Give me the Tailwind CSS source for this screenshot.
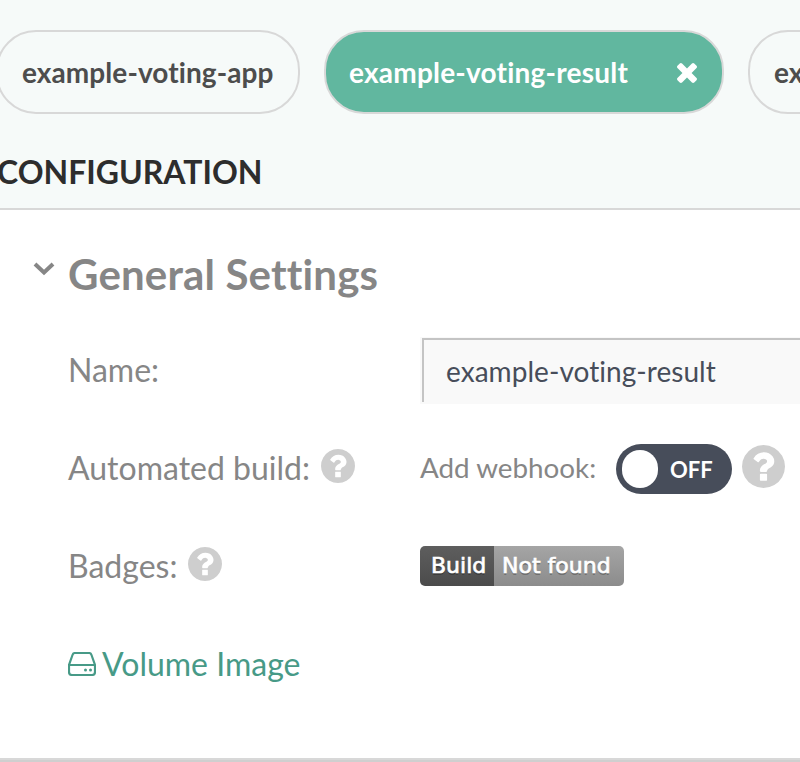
<!DOCTYPE html>
<html lang="en">
<head>
<meta charset="utf-8">
<title>Configuration</title>
<script src="https://cdn.jsdelivr.net/npm/@tailwindcss/browser@4"></script>
</head>
<body class="w-[800px] h-[762px] overflow-hidden bg-white font-['Lato',sans-serif] text-[#868686] [font-variant-ligatures:none]">
<svg class="hidden">
  <symbol id="help" viewBox="128 128 1536 1536"><path fill="currentColor" d="M1024 1376v-192q0-14-9-23t-23-9H800q-14 0-23 9t-9 23v192q0 14 9 23t23 9h192q14 0 23-9t9-23zm256-672q0-88-55.500-163T1086 425t-170-41q-243 0-371 213-15 24 8 42l132 100q7 6 19 6 16 0 25-12 53-68 86-92 34-24 86-24 48 0 85.500 26t37.500 59q0 38-20 61t-68 45q-63 28-115.500 86.500T768 1020v36q0 14 9 23t23 9h192q14 0 23-9t9-23q0-19 21.500-49.500T1100 957q32-18 49-28.500t46-35 44.500-48 28-60.500 12.500-81zm384 192q0 209-103 385.500T1281.500 1561 896 1664t-385.500-103T231 1281.500 128 896t103-385.500T510.500 231 896 128t385.500 103T1561 510.500 1664 896z"/></symbol>
</svg>
<header class="h-[210px] bg-[#f6faf9] border-b-2 border-[#d8d8d8] pt-[30px] overflow-hidden">
  <nav class="flex gap-6 -ml-1 w-[1200px] text-[28px] leading-[80px] font-bold text-[#4d4d4d]">
    <div class="w-[304px] h-[84px] shrink-0 rounded-[40px] border-2 border-[#d8d8d8] pl-6 whitespace-nowrap tracking-[0.08px]">example-voting-app</div>
    <div class="w-[400px] h-[84px] shrink-0 rounded-[40px] border-2 border-[#d8d8d8] bg-[#61b79f] text-white pl-[23px] pr-[25px] flex items-start justify-between">
      <span class="tracking-[0.22px]">example-voting-result</span>
      <svg class="w-[20px] h-[20px] mt-[31px]" viewBox="302 366 1188 1188"><path fill="currentColor" d="M1490 1322q0 40-28 68l-136 136q-28 28-68 28t-68-28l-294-294-294 294q-28 28-68 28t-68-28l-136-136q-28-28-28-68t28-68l294-294-294-294q-28-28-28-68t28-68l136-136q28-28 68-28t68 28l294 294 294-294q28-28 68-28t68 28l136 136q28 28 28 68t-28 68l-294 294 294 294q28 28 28 68z"/></svg>
    </div>
    <div class="w-[354px] h-[84px] shrink-0 rounded-[40px] border-2 border-[#d8d8d8] pl-6 whitespace-nowrap">example-voting-worker</div>
  </nav>
  <h1 class="mt-[38px] -ml-[3px] text-[32px] leading-[40px] font-bold text-[#2d2d2d]">CONFIGURATION</h1>
</header>
<main class="h-[548px] pt-[40px]">
  <div class="flex items-start pl-[33px] h-[78px]">
    <svg class="w-[22px] h-[14px] mt-[12px] mr-[13px]" viewBox="0 0 22 14" fill="none" stroke="currentColor" stroke-width="4"><path d="M2 2l9 8.500 9-8.500"/></svg>
    <h2 class="text-[42px] leading-[49px] font-bold tracking-[0.16px]">General Settings</h2>
  </div>
  <div class="flex pl-[68px] h-[91px] pt-[9px] text-[32px]">
    <label class="w-[352px] leading-[66px]">Name:</label>
    <div class="w-[380px] h-[67px] bg-[#f9f9f9] pl-[2px] pt-[1px]"><div class="h-[64px] border-t-2 border-l-2 border-[#c4c4c4] pl-[22px] text-[28px] leading-[63px] tracking-[0.05px] text-[#474d5a]">example-voting-result</div></div>
  </div>
  <div class="flex items-center pl-[68px] h-[98px]">
    <div class="w-[352px] flex items-center text-[32px]"><span>Automated build:</span><svg class="w-[34px] h-[34px] ml-[11px] -mt-[4px] text-[#cecece]"><use href="#help"/></svg></div>
    <span class="text-[27.8px] w-[196px]">Add webhook:</span>
    <div class="w-[116px] h-[50px] rounded-full bg-[#474d5a] flex items-center mt-[2px] pl-[6px] text-white text-[22px] font-bold"><span class="w-[36px] h-[38px] rounded-full bg-white mr-[12px]"></span><span class="mt-[1px]">OFF</span></div>
    <svg class="w-[43px] h-[43px] ml-[10px] -mt-[4px] text-[#cecece]"><use href="#help"/></svg>
  </div>
  <div class="flex items-center pl-[68px] h-[98px]">
    <div class="w-[352px] flex items-center text-[32px]"><span>Badges:</span><svg class="w-[34px] h-[34px] ml-[11px] -mt-[4px] text-[#cecece]"><use href="#help"/></svg></div>
    <div class="flex w-[204px] h-[40px] rounded-[5px] overflow-hidden -mt-[1px] font-['DejaVu_Sans',sans-serif] text-[22px] leading-[40px] text-white [-webkit-text-stroke:0.7px_white] [text-shadow:0_2px_0_rgba(0,0,0,.25)] whitespace-nowrap">
      <span class="w-[74px] pl-[11px] bg-linear-to-b from-[#5e5e5e] to-[#4b4b4b]">Build</span>
      <span class="w-[130px] pl-[8px] bg-linear-to-b from-[#a5a5a5] to-[#8c8c8c]">Not found</span>
    </div>
  </div>
  <div class="flex items-center pl-[68px] h-[98px] text-[#479a87] text-[32px]">
    <svg class="w-[28px] h-[24px] mr-[6px]" viewBox="0 0 28 24" fill="none" stroke="currentColor" stroke-width="2.200"><path d="M1 13L4.500 3Q5.200 1 7 1H21Q22.800 1 23.500 3L27 13V20Q27 23 24 23H4Q1 23 1 20V13H27"/><circle cx="17.500" cy="18" r="1.500" fill="currentColor" stroke="none"/><circle cx="22.500" cy="18" r="1.500" fill="currentColor" stroke="none"/></svg>
    <a>Volume Image</a>
  </div>
</main>
<footer class="h-[4px] bg-[#d8d8d8] border-b-2 border-[#cfcfcf]"></footer>
</body>
</html>
